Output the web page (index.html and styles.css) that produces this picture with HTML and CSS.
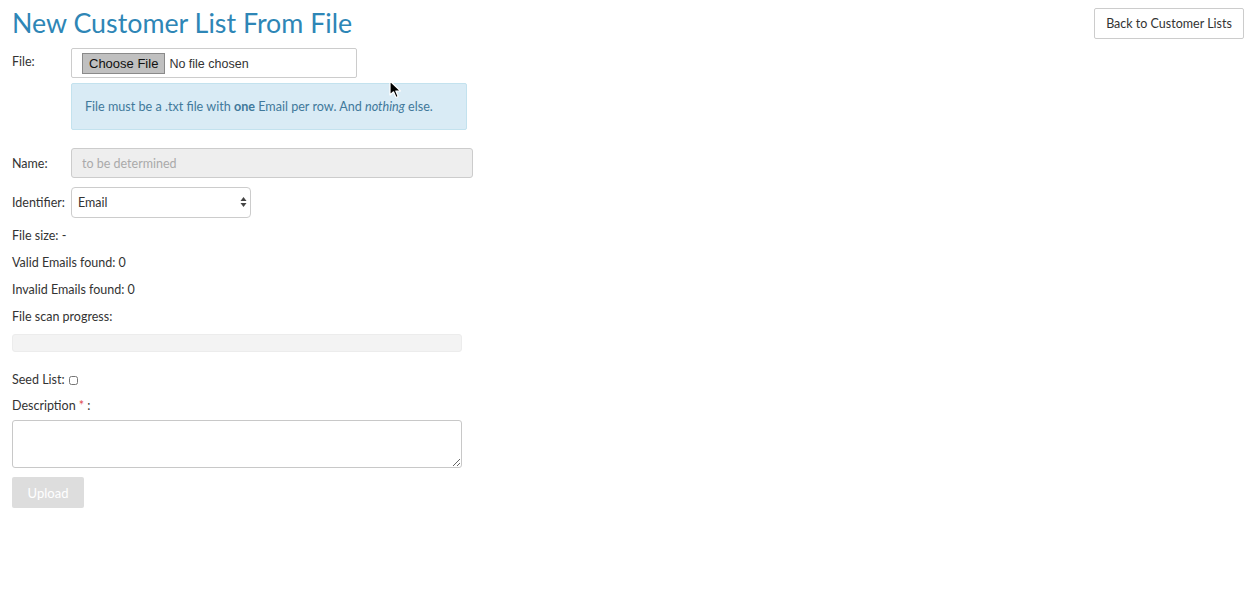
FILE: index.html
```html
<!DOCTYPE html>
<html>
<head>
    <title>New Customer List From File</title>
    <link rel="stylesheet" href="styles.css">
</head>
<body>
    <div class="page">
        <div class="header">
            <h1>New Customer List From File</h1>
            <button class="btn-back" type="button">Back to Customer Lists</button>
        </div>

        <form class="upload-form">
            <div class="row row-file">
                <label class="row-label" for="file">File:</label>
                <div class="row-field">
                    <div class="file-box">
                        <input type="file" id="file" class="file-input">
                    </div>
                    <div class="alert-info">
                        File must be a .txt file with&nbsp;<b>one</b>&nbsp;Email per row. And&nbsp;<i>nothing</i>&nbsp;else.
                    </div>
                </div>
            </div>

            <div class="row row-name">
                <label class="row-label" for="name">Name:</label>
                <input type="text" id="name" class="text-input" placeholder="to be determined" disabled>
            </div>

            <div class="row row-identifier">
                <label class="row-label" for="identifier">Identifier:</label>
                <div class="select-wrap">
                    <select id="identifier" class="select-input">
                        <option>Email</option>
                    </select>
                    <!-- up/down arrows like the mac select -->
                    <svg class="select-arrows" width="7" height="12" viewBox="0 0 7 12">
                        <path d="M3.5 1 L6.5 5 L0.5 5 Z" fill="#444"/>
                        <path d="M3.5 11 L6.5 7 L0.5 7 Z" fill="#444"/>
                    </svg>
                </div>
            </div>

            <p class="stat">File size: -</p>
            <p class="stat">Valid Emails found: 0</p>
            <p class="stat">Invalid Emails found: 0</p>
            <p class="stat">File scan progress:</p>

            <div class="progress"><div class="progress-bar" style="width: 0%"></div></div>

            <p class="stat seed">Seed List: <input type="checkbox" class="seed-check"></p>
            <p class="stat desc-label">Description <span class="required">*</span> :</p>

            <textarea class="desc-input"></textarea>

            <button class="btn-upload" type="button" disabled>Upload</button>
        </form>

        <!-- mouse pointer caught in the screenshot -->
        <svg class="cursor" width="13" height="19" viewBox="0 0 13 19">
            <path d="M1 1 L1 15 L4.5 11.8 L7 17.5 L9.2 16.5 L6.8 11 L11.5 11 Z" fill="#000" stroke="#fff" stroke-width="1.2" stroke-linejoin="round"/>
        </svg>
    </div>
</body>
</html>
```

FILE: styles.css
```css
body {
    margin: 0;
    padding: 0;
    font-family: 'Lato', 'Open Sans', sans-serif;
    font-size: 12.5px;
    color: #333;
    background-color: #fff;
}

.page {
    position: relative;
    padding: 8px 6px 0 12px;
    min-height: 591px;
}

.header {
    display: flex;
    justify-content: space-between;
    align-items: flex-start;
}

h1 {
    margin: 0;
    font-size: 26.8px;
    font-weight: 400;
    line-height: 30px;
    color: #2e86b6;
}

.btn-back {
    width: 150px;
    height: 31px;
    padding: 0;
    background-color: #fff;
    border: 1px solid #ccc;
    border-radius: 2px;
    font-family: 'Lato', sans-serif;
    font-size: 12.5px;
    color: #333;
}

.upload-form {
    margin-top: 9px;
}

.row {
    display: flex;
    align-items: center;
}

.row-label {
    width: 59px;
    flex-shrink: 0;
}

.row-file {
    align-items: flex-start;
}

.row-file .row-label {
    margin-top: 6px;
}

.file-box {
    width: 286px;
    height: 30px;
    box-sizing: border-box;
    border: 1px solid #ccc;
    border-radius: 2px;
    background-color: #fff;
    display: flex;
    align-items: center;
    padding-left: 10px;
}

.file-input {
    font-family: 'Liberation Sans', Arial, sans-serif;
    font-size: 12.5px;
    color: #333;
}

.file-input::file-selector-button {
    font-family: 'Liberation Sans', Arial, sans-serif;
    font-size: 13px;
    height: 21px;
    padding: 0 6px;
    margin-right: 4px;
    background-color: #c0c0c0;
    border: 1px solid #8a8a8a;
    border-radius: 0;
    color: #111;
}

.alert-info {
    margin-top: 5px;
    padding: 0 13px;
    box-sizing: border-box;
    width: 396px;
    height: 47px;
    display: flex;
    align-items: center;
    background-color: #d9ebf5;
    border: 1px solid #c3e2ee;
    border-radius: 2px;
    font-size: 12.6px;
    color: #41799b;
}

.alert-info b {
    font-weight: 700;
}

.row-name {
    margin-top: 18px;
}

.text-input {
    width: 402px;
    height: 30px;
    box-sizing: border-box;
    padding: 0 10px;
    background-color: #eeeeee;
    border: 1px solid #cccccc;
    border-radius: 3px;
    font-family: 'Lato', sans-serif;
    font-size: 12.5px;
}

.text-input::placeholder {
    color: #aaa;
}

.row-identifier {
    margin-top: 9px;
}

.select-wrap {
    position: relative;
}

.select-input {
    appearance: none;
    -webkit-appearance: none;
    width: 180px;
    height: 31px;
    padding: 0 6px;
    background-color: #fff;
    border: 1px solid #ccc;
    border-radius: 4px;
    font-family: 'Lato', sans-serif;
    font-size: 12.5px;
    color: #333;
}

.select-arrows {
    position: absolute;
    right: 4px;
    top: 9px;
    pointer-events: none;
}

.stat {
    margin: 0;
    line-height: 17px;
    margin-top: 10px;
}

.row-identifier + .stat {
    margin-top: 9px;
}

.progress {
    width: 450px;
    height: 18px;
    margin-top: 9px;
    background-color: #f3f3f3;
    border: 1px solid #ececec;
    border-radius: 3px;
    box-sizing: border-box;
}

.progress-bar {
    height: 100%;
    background-color: #2e86b6;
}

.seed {
    margin-top: 19px;
    display: flex;
    align-items: center;
}

.seed-check {
    width: 9px;
    height: 9px;
    margin: 2px 0 0 4px;
}

.desc-label {
    margin-top: 9px;
}

.required {
    color: #e24b4b;
}

.desc-input {
    display: block;
    width: 450px;
    height: 48px;
    box-sizing: border-box;
    margin-top: 6px;
    border: 1px solid #c8c8c8;
    border-radius: 3px;
    background-color: #fff;
    resize: vertical;
}

.btn-upload {
    display: block;
    margin-top: 9px;
    width: 72px;
    height: 31px;
    background-color: #dddddd;
    border: none;
    border-radius: 2px;
    color: #fff;
    font-family: 'Lato', sans-serif;
    font-size: 13px;
}

.cursor {
    position: absolute;
    left: 389px;
    top: 80px;
}
```
